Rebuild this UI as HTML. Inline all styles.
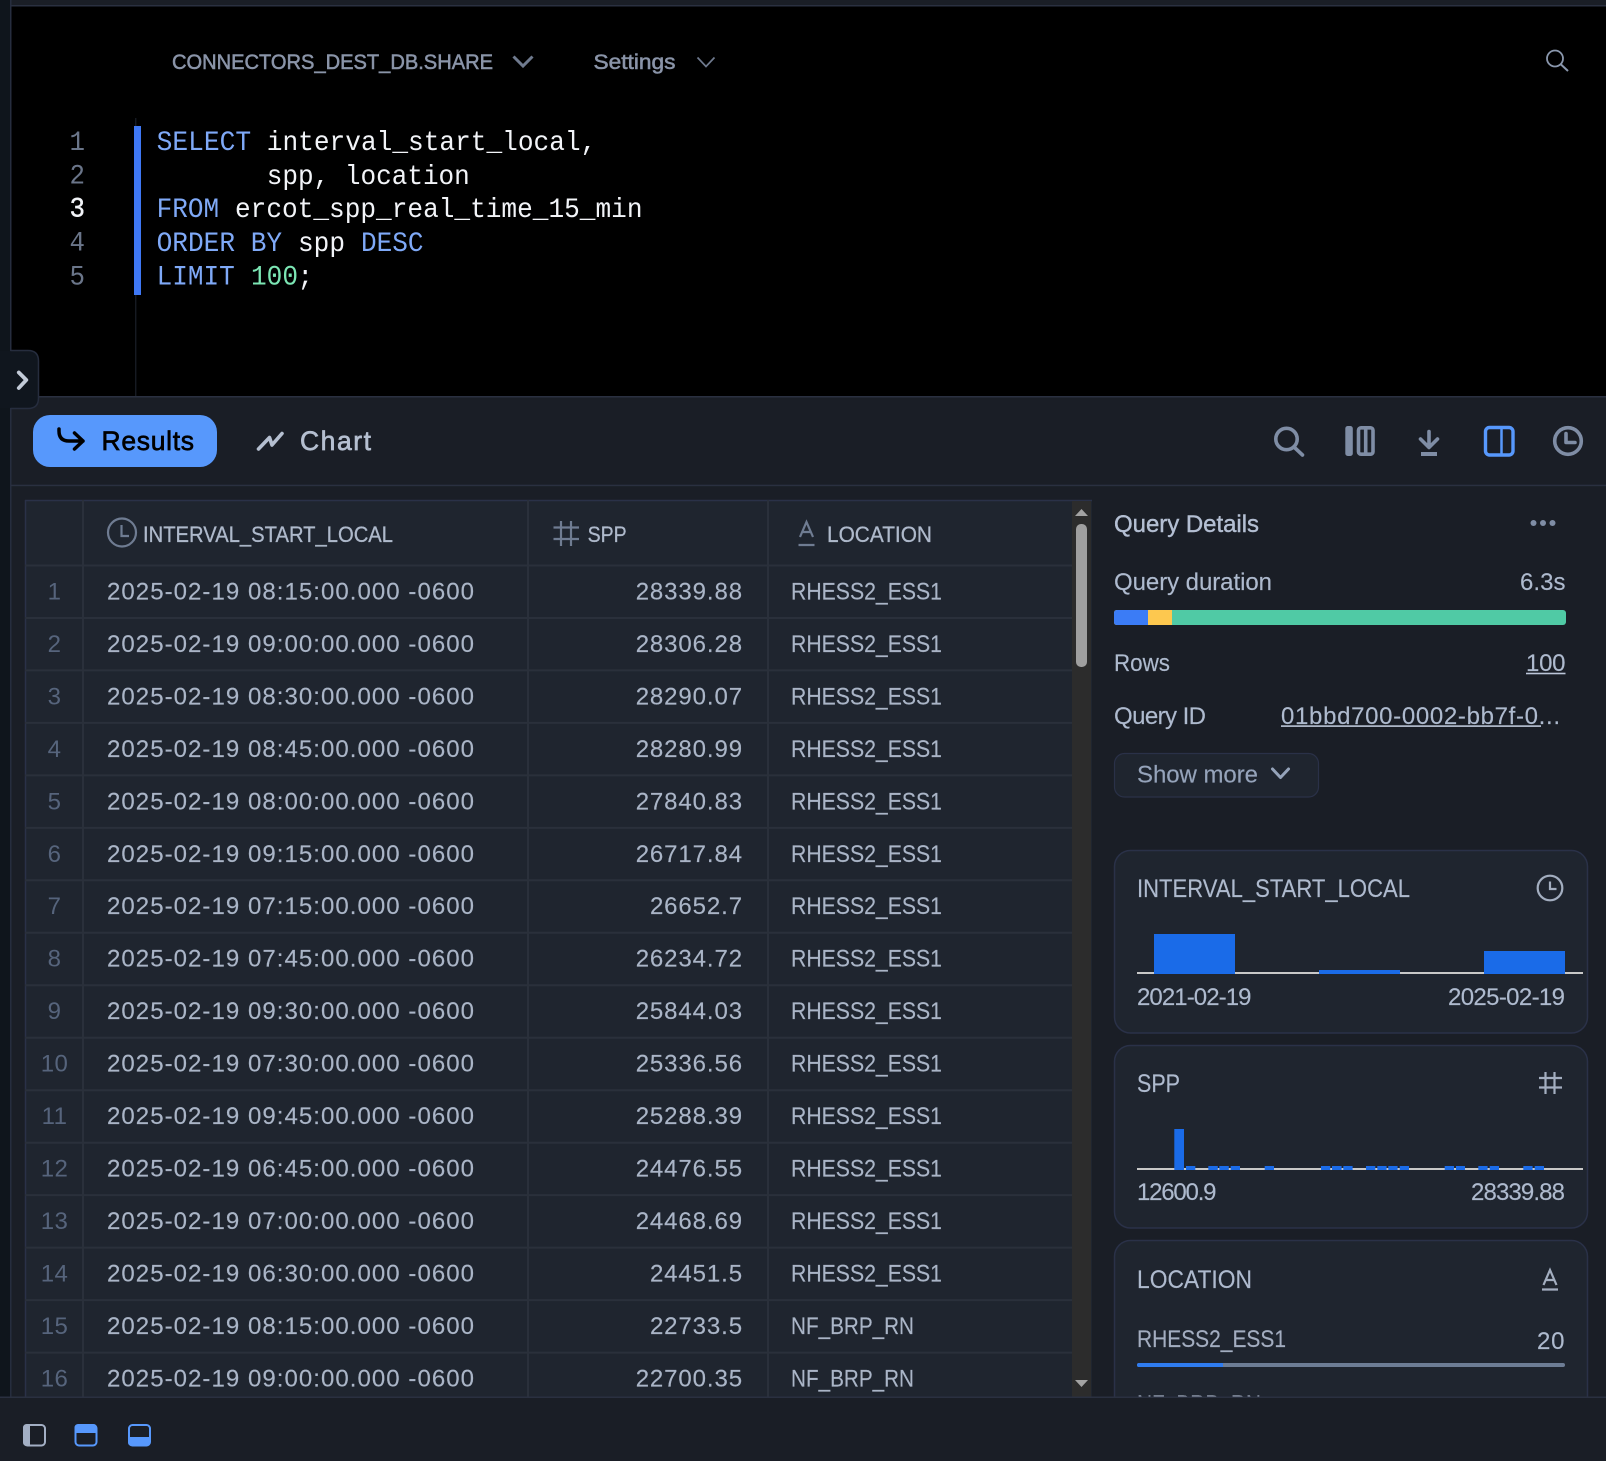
<!DOCTYPE html>
<html lang="en">
<head>
<meta charset="utf-8">
<title>Query Results</title>
<style>
html,body{margin:0;padding:0;background:#1a1e26;width:1606px;height:1461px;overflow:hidden}
svg{display:block}
text{font-family:"Liberation Sans",sans-serif;white-space:pre}
.mono{font-family:"Liberation Mono",monospace;font-size:27.5px}
.kw{fill:#7fa9f7}.id{fill:#f2f4f8}.nm{fill:#7ce6b4}.ln{fill:#6a7589}
.top{font-size:21.5px;fill:#8a94a8;stroke:#8a94a8;stroke-width:.55px}
.tab{font-size:26.5px;stroke-width:.65px}
.hd{font-size:22.5px;fill:#aeb9cb;stroke:#aeb9cb;stroke-width:.3px}
.c{font-size:24px;fill:#aab5c7;stroke:#aab5c7;stroke-width:.15px}
.n{font-size:24px;fill:#56647c;letter-spacing:.4px}
.v{font-size:24px;fill:#aab5c7;stroke:#aab5c7;stroke-width:.15px;letter-spacing:.9px}
.p{font-size:24px;fill:#aebace;stroke:#aebace;stroke-width:.15px}
.pm{font-size:24px;fill:#b4bfd3;stroke:#b4bfd3;stroke-width:.4px}
.card{fill:#1f252f;stroke:#2a3148;stroke-width:1.5}
.grid{stroke:#2a303b;stroke-width:2;fill:none}
.i{fill:none;stroke:#7f8da5;stroke-width:3.6;stroke-linecap:round;stroke-linejoin:round}
.t{fill:none;stroke:#6f7c92;stroke-width:2.2}
.s{fill:none;stroke:#a3aec0;stroke-width:2.2}
</style>
</head>
<body>
<svg xmlns="http://www.w3.org/2000/svg" width="1606" height="1461" viewBox="0 0 1606 1461">
<!-- base -->
<rect width="1606" height="1461" fill="#1a1e26"/>
<rect x="0" y="0" width="1606" height="6" fill="#1a1e26"/>
<rect x="0" y="5" width="1606" height="1.5" fill="#2a3040"/>
<rect x="0" y="0" width="10" height="1461" fill="#0f151c"/>
<rect x="10" y="0" width="1.5" height="1400" fill="#262d3e"/>

<!-- editor -->
<rect x="11.5" y="6.5" width="1594.5" height="389.5" fill="#000"/>
<rect x="0" y="396" width="1606" height="1.5" fill="#2a3040"/>
<text class="top" x="172" y="69" textLength="321" lengthAdjust="spacingAndGlyphs">CONNECTORS_DEST_DB.SHARE</text>
<path d="M513.5 56.5 L523 66 L532.5 56.5" fill="none" stroke="#6f7a8e" stroke-width="3"/>
<text class="top" x="593.5" y="69" textLength="82" lengthAdjust="spacingAndGlyphs">Settings</text>
<path d="M697.5 57.5 L706 66.5 L714.5 57.5" fill="none" stroke="#6f7a8e" stroke-width="1.7"/>
<circle cx="1555" cy="58.5" r="8" fill="none" stroke="#8a97ad" stroke-width="1.8"/>
<path d="M1561 64.5 L1568 71" fill="none" stroke="#8a97ad" stroke-width="2"/>

<rect x="135.3" y="118" width="1" height="278" fill="#1f2530"/>
<rect x="134" y="126" width="7" height="169" fill="#3f78f5"/>

<text class="mono ln" x="69.5" y="150" textLength="15.5" lengthAdjust="spacingAndGlyphs">1</text>
<text class="mono ln" x="69.5" y="183.6" textLength="15.5" lengthAdjust="spacingAndGlyphs">2</text>
<text class="mono" fill="#f2f4f8" x="69.5" y="216.5" textLength="15.5" lengthAdjust="spacingAndGlyphs" stroke="#f2f4f8" stroke-width=".4">3</text>
<text class="mono ln" x="69.5" y="250.3" textLength="15.5" lengthAdjust="spacingAndGlyphs">4</text>
<text class="mono ln" x="69.5" y="284.4" textLength="15.5" lengthAdjust="spacingAndGlyphs">5</text>

<text class="mono kw" x="156.6" y="150" textLength="94.5" lengthAdjust="spacingAndGlyphs">SELECT</text>
<text class="mono id" x="266.8" y="150" textLength="329.5" lengthAdjust="spacingAndGlyphs">interval_start_local,</text>
<text class="mono id" x="266.8" y="184" textLength="203" lengthAdjust="spacingAndGlyphs">spp, location</text>
<text class="mono kw" x="156.6" y="217.2" textLength="62.5" lengthAdjust="spacingAndGlyphs">FROM</text>
<text class="mono id" x="235" y="217.2" textLength="407.5" lengthAdjust="spacingAndGlyphs">ercot_spp_real_time_15_min</text>
<text class="mono kw" x="156.6" y="250.8" textLength="125.5" lengthAdjust="spacingAndGlyphs">ORDER BY</text>
<text class="mono id" x="298" y="250.8" textLength="47" lengthAdjust="spacingAndGlyphs">spp</text>
<text class="mono kw" x="361" y="250.8" textLength="62.5" lengthAdjust="spacingAndGlyphs">DESC</text>
<text class="mono kw" x="156.6" y="284.4" textLength="78.2" lengthAdjust="spacingAndGlyphs">LIMIT</text>
<text class="mono nm" x="251" y="284.4" textLength="47" lengthAdjust="spacingAndGlyphs">100</text>
<text class="mono id" x="297.5" y="284.4" textLength="15.5" lengthAdjust="spacingAndGlyphs">;</text>

<!-- collapse handle -->
<path d="M10 350.5 H28 Q38.5 350.5 38.5 361 V398 Q38.5 408.5 28 408.5 H10" fill="#10161e" stroke="#262d3e" stroke-width="1.5"/>
<rect x="0" y="351" width="10.5" height="57" fill="#10161e"/>
<path d="M18.8 372.5 L26.3 380 L18.8 388" fill="none" stroke="#c3cbd8" stroke-width="3.8" stroke-linecap="round" stroke-linejoin="round"/>

<!-- results toolbar -->
<rect x="33" y="415" width="184" height="52" rx="17" fill="#5798fc"/>
<path d="M59 429 V431 Q59 441 69 441 H83 M74.5 433 L83 441 L74.5 449" fill="none" stroke="#000" stroke-width="3.5" stroke-linecap="round" stroke-linejoin="round"/>
<text class="tab" x="101.5" y="450" textLength="92.5" fill="#000" stroke="#000">Results</text>
<path d="M258.5 449 L269.5 437.5 L272 445 L282 433.5" fill="none" stroke="#b5bfd0" stroke-width="3.6" stroke-linecap="round" stroke-linejoin="round"/>
<text class="tab" x="300" y="450" textLength="71" fill="#b5bfd0" stroke="#b5bfd0">Chart</text>

<circle class="i" cx="1286.5" cy="439" r="10.7"/>
<path class="i" d="M1294.5 447.5 L1302.5 455"/>
<rect x="1345.3" y="426" width="7.5" height="30" rx="2.5" fill="#7f8da5"/>
<rect x="1358.5" y="427.8" width="14.5" height="26.4" rx="2.5" fill="none" stroke="#7f8da5" stroke-width="3.6"/>
<path d="M1365.7 427 V455" stroke="#7f8da5" stroke-width="3.6" fill="none"/>
<path class="i" d="M1429 431.5 V447 M1420.5 439 L1429 447.5 L1437.5 439"/>
<rect x="1421" y="452" width="16" height="4" fill="#7f8da5"/>
<rect x="1485.5" y="427.5" width="27.5" height="27.5" rx="4" fill="none" stroke="#5798fc" stroke-width="3.4"/>
<path d="M1501.5 427 V455" stroke="#5798fc" stroke-width="2.5" fill="none"/>
<circle class="i" cx="1568" cy="441" r="13.3"/>
<path class="i" d="M1566 433.5 V442.5 H1575"/>
<rect x="11" y="484.7" width="1595" height="1.5" fill="#2a3040"/>

<!-- table -->
<rect x="25" y="500" width="1067" height="900" fill="#1f252f"/>
<path d="M25 500.5 H1092 M25.5 500 V1400" fill="none" stroke="#2a3148" stroke-width="1.5"/>
<path class="grid" d="M83 500 V1400 M528 500 V1400 M768 500 V1400"/>
<path class="grid" d="M25 565.5 H1072 M25 618 H1072 M25 670.4 H1072 M25 722.9 H1072 M25 775.4 H1072 M25 827.9 H1072 M25 880.3 H1072 M25 932.8 H1072 M25 985.3 H1072 M25 1037.7 H1072 M25 1090.2 H1072 M25 1142.7 H1072 M25 1195.1 H1072 M25 1247.6 H1072 M25 1300.1 H1072 M25 1352.6 H1072"/>

<circle class="t" cx="122" cy="532.5" r="14"/>
<path class="t" d="M121.5 525 V536 H129"/>
<text class="hd" x="143" y="542" textLength="250" lengthAdjust="spacingAndGlyphs">INTERVAL_START_LOCAL</text>
<path class="t" d="M561 521 V546 M571 521 V546 M553.5 527.5 H579 M553.5 539 H579"/>
<text class="hd" x="587.6" y="542" textLength="39" lengthAdjust="spacingAndGlyphs">SPP</text>
<path class="t" d="M800 537 L806.5 522 L813 537 M802.3 532 H810.7 M798.5 545 H814.5"/>
<text class="hd" x="827" y="542" textLength="105" lengthAdjust="spacingAndGlyphs">LOCATION</text>

<text class="n" text-anchor="middle" x="54.5" y="599.4">1</text><text class="c" x="107" y="599.4" textLength="367">2025-02-19 08:15:00.000 -0600</text><text class="v" text-anchor="end" x="743" y="599.4">28339.88</text><text class="c" x="791" y="599.4" textLength="151" lengthAdjust="spacingAndGlyphs">RHESS2_ESS1</text>
<text class="n" text-anchor="middle" x="54.5" y="651.9">2</text><text class="c" x="107" y="651.9" textLength="367">2025-02-19 09:00:00.000 -0600</text><text class="v" text-anchor="end" x="743" y="651.9">28306.28</text><text class="c" x="791" y="651.9" textLength="151" lengthAdjust="spacingAndGlyphs">RHESS2_ESS1</text>
<text class="n" text-anchor="middle" x="54.5" y="704.3">3</text><text class="c" x="107" y="704.3" textLength="367">2025-02-19 08:30:00.000 -0600</text><text class="v" text-anchor="end" x="743" y="704.3">28290.07</text><text class="c" x="791" y="704.3" textLength="151" lengthAdjust="spacingAndGlyphs">RHESS2_ESS1</text>
<text class="n" text-anchor="middle" x="54.5" y="756.8">4</text><text class="c" x="107" y="756.8" textLength="367">2025-02-19 08:45:00.000 -0600</text><text class="v" text-anchor="end" x="743" y="756.8">28280.99</text><text class="c" x="791" y="756.8" textLength="151" lengthAdjust="spacingAndGlyphs">RHESS2_ESS1</text>
<text class="n" text-anchor="middle" x="54.5" y="809.3">5</text><text class="c" x="107" y="809.3" textLength="367">2025-02-19 08:00:00.000 -0600</text><text class="v" text-anchor="end" x="743" y="809.3">27840.83</text><text class="c" x="791" y="809.3" textLength="151" lengthAdjust="spacingAndGlyphs">RHESS2_ESS1</text>
<text class="n" text-anchor="middle" x="54.5" y="861.8">6</text><text class="c" x="107" y="861.8" textLength="367">2025-02-19 09:15:00.000 -0600</text><text class="v" text-anchor="end" x="743" y="861.8">26717.84</text><text class="c" x="791" y="861.8" textLength="151" lengthAdjust="spacingAndGlyphs">RHESS2_ESS1</text>
<text class="n" text-anchor="middle" x="54.5" y="914.2">7</text><text class="c" x="107" y="914.2" textLength="367">2025-02-19 07:15:00.000 -0600</text><text class="v" text-anchor="end" x="743" y="914.2">26652.7</text><text class="c" x="791" y="914.2" textLength="151" lengthAdjust="spacingAndGlyphs">RHESS2_ESS1</text>
<text class="n" text-anchor="middle" x="54.5" y="966.7">8</text><text class="c" x="107" y="966.7" textLength="367">2025-02-19 07:45:00.000 -0600</text><text class="v" text-anchor="end" x="743" y="966.7">26234.72</text><text class="c" x="791" y="966.7" textLength="151" lengthAdjust="spacingAndGlyphs">RHESS2_ESS1</text>
<text class="n" text-anchor="middle" x="54.5" y="1019.2">9</text><text class="c" x="107" y="1019.2" textLength="367">2025-02-19 09:30:00.000 -0600</text><text class="v" text-anchor="end" x="743" y="1019.2">25844.03</text><text class="c" x="791" y="1019.2" textLength="151" lengthAdjust="spacingAndGlyphs">RHESS2_ESS1</text>
<text class="n" text-anchor="middle" x="54.5" y="1071.6">10</text><text class="c" x="107" y="1071.6" textLength="367">2025-02-19 07:30:00.000 -0600</text><text class="v" text-anchor="end" x="743" y="1071.6">25336.56</text><text class="c" x="791" y="1071.6" textLength="151" lengthAdjust="spacingAndGlyphs">RHESS2_ESS1</text>
<text class="n" text-anchor="middle" x="54.5" y="1124.1">11</text><text class="c" x="107" y="1124.1" textLength="367">2025-02-19 09:45:00.000 -0600</text><text class="v" text-anchor="end" x="743" y="1124.1">25288.39</text><text class="c" x="791" y="1124.1" textLength="151" lengthAdjust="spacingAndGlyphs">RHESS2_ESS1</text>
<text class="n" text-anchor="middle" x="54.5" y="1176.6">12</text><text class="c" x="107" y="1176.6" textLength="367">2025-02-19 06:45:00.000 -0600</text><text class="v" text-anchor="end" x="743" y="1176.6">24476.55</text><text class="c" x="791" y="1176.6" textLength="151" lengthAdjust="spacingAndGlyphs">RHESS2_ESS1</text>
<text class="n" text-anchor="middle" x="54.5" y="1229">13</text><text class="c" x="107" y="1229" textLength="367">2025-02-19 07:00:00.000 -0600</text><text class="v" text-anchor="end" x="743" y="1229">24468.69</text><text class="c" x="791" y="1229" textLength="151" lengthAdjust="spacingAndGlyphs">RHESS2_ESS1</text>
<text class="n" text-anchor="middle" x="54.5" y="1281.5">14</text><text class="c" x="107" y="1281.5" textLength="367">2025-02-19 06:30:00.000 -0600</text><text class="v" text-anchor="end" x="743" y="1281.5">24451.5</text><text class="c" x="791" y="1281.5" textLength="151" lengthAdjust="spacingAndGlyphs">RHESS2_ESS1</text>
<text class="n" text-anchor="middle" x="54.5" y="1334">15</text><text class="c" x="107" y="1334" textLength="367">2025-02-19 08:15:00.000 -0600</text><text class="v" text-anchor="end" x="743" y="1334">22733.5</text><text class="c" x="791" y="1334" textLength="123" lengthAdjust="spacingAndGlyphs">NF_BRP_RN</text>
<text class="n" text-anchor="middle" x="54.5" y="1386.5">16</text><text class="c" x="107" y="1386.5" textLength="367">2025-02-19 09:00:00.000 -0600</text><text class="v" text-anchor="end" x="743" y="1386.5">22700.35</text><text class="c" x="791" y="1386.5" textLength="123" lengthAdjust="spacingAndGlyphs">NF_BRP_RN</text>

<!-- scrollbar -->
<rect x="1072" y="501" width="19" height="899" fill="#2c2c2c"/>
<path d="M1075 516 L1081.5 509 L1088 516 Z" fill="#a3a3a3"/>
<rect x="1076" y="524" width="11" height="143" rx="5" fill="#9f9f9f"/>
<path d="M1075 1380 L1081.5 1387 L1088 1380 Z" fill="#a3a3a3"/>

<!-- query details -->
<text class="pm" x="1114" y="532" textLength="145">Query Details</text>
<circle cx="1533.5" cy="523" r="3" fill="#7f8da5"/><circle cx="1543" cy="523" r="3" fill="#7f8da5"/><circle cx="1552.5" cy="523" r="3" fill="#7f8da5"/>
<text class="p" x="1114" y="590" textLength="158">Query duration</text>
<text class="p" x="1520" y="590" textLength="45.5">6.3s</text>
<rect x="1114" y="610" width="452" height="15" rx="3" fill="#50caa5"/>
<path d="M1172 610 H1117 Q1114 610 1114 613 V622 Q1114 625 1117 625 H1172 Z" fill="#fdc84f"/>
<path d="M1148 610 H1117 Q1114 610 1114 613 V622 Q1114 625 1117 625 H1148 Z" fill="#3b7cf6"/>
<text class="p" x="1114" y="671" textLength="56" lengthAdjust="spacingAndGlyphs">Rows</text>
<text class="p" x="1526" y="671" textLength="39.5">100</text>
<rect x="1526" y="672.7" width="39.5" height="1.6" fill="#bcc6d8"/>
<text class="p" x="1114" y="724" textLength="92">Query ID</text>
<text class="p" x="1281" y="724" textLength="279">01bbd700-0002-bb7f-0...</text>
<rect x="1281" y="725.3" width="260" height="1.6" fill="#bcc6d8"/>
<rect x="1114.5" y="753.5" width="204" height="43.5" rx="10" fill="#1f252f" stroke="#2a3148" stroke-width="1.2"/>
<text class="p" x="1137" y="782.5" textLength="121" style="fill:#95a3ba;stroke:#95a3ba">Show more</text>
<path d="M1272.5 769 L1280.5 777.5 L1288.5 769" fill="none" stroke="#95a3ba" stroke-width="3" stroke-linecap="round" stroke-linejoin="round"/>

<!-- card 1 -->
<rect class="card" x="1114.5" y="850.5" width="473" height="182.5" rx="16"/>
<text class="p" x="1137" y="897" textLength="273" lengthAdjust="spacingAndGlyphs" style="font-size:25px">INTERVAL_START_LOCAL</text>
<circle class="s" cx="1550" cy="888" r="12.3"/>
<path class="s" d="M1550 881.5 V889 H1556.5"/>
<path d="M1154 934 H1235 V974 H1154 Z M1319 970 H1400 V974 H1319 Z M1484 951 H1565 V974 H1484 Z" fill="#1a6be8"/>
<path d="M1137 973 H1154 M1235 973 H1319 M1400 973 H1484 M1565 973 H1583" stroke="#c8c8c8" stroke-width="2" fill="none"/>
<text class="p" x="1137" y="1005" textLength="114.5">2021-02-19</text>
<text class="p" x="1448" y="1005" textLength="117">2025-02-19</text>

<!-- card 2 -->
<rect class="card" x="1114.5" y="1045.5" width="473" height="182.5" rx="16"/>
<text class="p" x="1137" y="1092" textLength="43" lengthAdjust="spacingAndGlyphs" style="font-size:25px">SPP</text>
<path class="s" d="M1545.5 1072 V1094 M1554.5 1072 V1094 M1539 1078 H1562 M1539 1087.5 H1562"/>
<path d="M1137 1169 H1583" stroke="#c8c8c8" stroke-width="2" fill="none"/>
<rect x="1174.3" y="1129" width="9.7" height="41" fill="#1a6be8"/>
<g fill="#1a6be8">
<rect x="1186" y="1166" width="9.3" height="4"/><rect x="1208.3" y="1166" width="9.5" height="4"/><rect x="1219.3" y="1166" width="9.5" height="4"/><rect x="1230.7" y="1166" width="9.3" height="4"/><rect x="1264.7" y="1166" width="9.3" height="4"/><rect x="1321" y="1166" width="9.3" height="4"/><rect x="1332" y="1166" width="9.6" height="4"/><rect x="1343.3" y="1166" width="9.3" height="4"/><rect x="1366" y="1166" width="9.3" height="4"/><rect x="1377.3" y="1166" width="9.3" height="4"/><rect x="1388.3" y="1166" width="9.3" height="4"/><rect x="1399.7" y="1166" width="9.3" height="4"/><rect x="1444.7" y="1166" width="9.3" height="4"/><rect x="1456" y="1166" width="9" height="4"/><rect x="1478.3" y="1166" width="9.3" height="4"/><rect x="1489.7" y="1166" width="9.3" height="4"/><rect x="1523.3" y="1166" width="9.3" height="4"/><rect x="1534.7" y="1166" width="9.3" height="4"/>
</g>
<text class="p" x="1137" y="1200" textLength="79.5">12600.9</text>
<text class="p" x="1471" y="1200" textLength="94">28339.88</text>

<!-- card 3 -->
<rect class="card" x="1114.5" y="1240.5" width="473" height="190" rx="16"/>
<text class="p" x="1137" y="1288" textLength="115" lengthAdjust="spacingAndGlyphs" style="font-size:25px">LOCATION</text>
<path class="s" d="M1543.5 1285 L1550 1270 L1556.5 1285 M1545.8 1280 H1554.2 M1542 1289.5 H1558"/>
<text class="p" x="1137" y="1347" textLength="149" lengthAdjust="spacingAndGlyphs" style="fill:#a3adc0;stroke:#a3adc0">RHESS2_ESS1</text>
<text class="p" x="1537" y="1349" textLength="27.5">20</text>
<rect x="1137" y="1363" width="428" height="4" rx="2" fill="#6d7d95"/>
<path d="M1223 1363 H1139 Q1137 1363 1137 1365 Q1137 1367 1139 1367 H1223 Z" fill="#2f7cf0"/>
<text class="p" x="1137" y="1412" textLength="124" lengthAdjust="spacingAndGlyphs" style="fill:#a3adc0;stroke:#a3adc0">NF_BRP_RN</text>
<text class="p" x="1545" y="1414" textLength="19">18</text>

<!-- bottom bar -->
<rect x="0" y="1397" width="1606" height="64" fill="#1a1e26"/>
<rect x="0" y="1396.5" width="1606" height="1.5" fill="#2a3040"/>
<path d="M27 1424 H30 V1446 H27 Q23 1446 23 1442 V1428 Q23 1424 27 1424 Z" fill="#a3afc4"/>
<rect x="24" y="1425" width="21" height="20.5" rx="3.5" fill="none" stroke="#a3afc4" stroke-width="2"/>
<path d="M78.5 1424 H93 Q97 1424 97 1428 V1433 H74.5 V1428 Q74.5 1424 78.5 1424 Z" fill="#5798fc"/>
<rect x="75.5" y="1425" width="21" height="20.5" rx="3.5" fill="none" stroke="#5798fc" stroke-width="2"/>
<path d="M128 1437 H150 V1442 Q150 1446 146 1446 H132 Q128 1446 128 1442 Z" fill="#5798fc"/>
<rect x="129" y="1425" width="21" height="20.5" rx="3.5" fill="none" stroke="#5798fc" stroke-width="2"/>
</svg>
</body>
</html>
